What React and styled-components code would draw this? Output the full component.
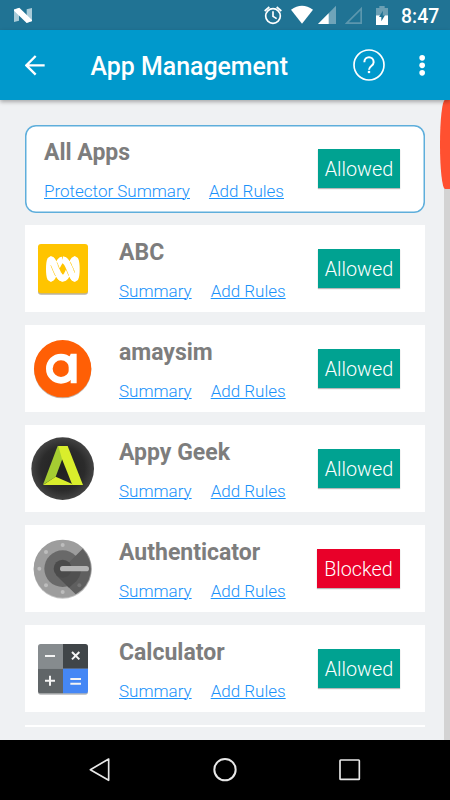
import React, { Component } from "react";
import styled, { createGlobalStyle } from "styled-components";

// 1:3 lissajous curve used by the ABC logo
const curve = (from, to) => {
  const points = [];
  for (let i = 0; i <= 60; i++) {
    const t = (from + ((to - from) * i) / 60) * Math.PI;
    const x = 128.5 + 41 * Math.sin(t);
    const y = 147 - 28 * Math.cos(3 * t);
    points.push(x.toFixed(1) + " " + y.toFixed(1));
  }
  return "M" + points.join("L");
};

const AbcIcon = () => (
  <AppIcon viewBox="33 51 192 192">
    <rect x="54" y="76" width="150" height="148" rx="9" fill="#b9b3a4" />
    <rect x="54" y="72" width="150" height="148" rx="9" fill="#ffc400" />
    <g fill="none" stroke="#fff" strokeWidth="19">
      <path d={curve(0, 2)} />
      <path d={curve(1.1, 1.23)} stroke="#ffc400" strokeWidth="22" />
      <path d={curve(0.1, 0.23)} stroke="#ffc400" strokeWidth="22" />
      <path d={curve(1, 1.33)} />
      <path d={curve(0, 0.33)} />
    </g>
  </AppIcon>
);

const AmaysimIcon = () => (
  <AppIcon viewBox="33 51 192 192">
    <circle cx="128" cy="149" r="86" fill="#c3b4aa" />
    <circle cx="128" cy="146" r="86" fill="#ff5f05" />
    <circle
      cx="123"
      cy="146"
      r="35"
      fill="none"
      stroke="#fff"
      strokeWidth="20"
    />
    <path d="M149 108q2-3 3-7h18v89h-18v-12l-6-4V112z" fill="#fff" />
  </AppIcon>
);

const AppyGeekIcon = () => (
  <AppIcon viewBox="33 51 192 192">
    <defs>
      <radialGradient id="appy">
        <stop offset="0" stopColor="#202020" />
        <stop offset="0.7" stopColor="#2b2b2b" />
        <stop offset="1" stopColor="#434343" />
      </radialGradient>
    </defs>
    <circle cx="128" cy="146" r="94" fill="url(#appy)" />
    <path d="M113 78h14v39l-20 53-38 24z" fill="#a5cd32" />
    <path d="M115 78h28l46 117h-32l-31-78z" fill="#d9ee2c" />
    <path d="M69 195l38-25 50 22v3z" fill="#d9ee2c" />
  </AppIcon>
);

const AuthenticatorIcon = () => (
  <AppIcon viewBox="33 51 192 192">
    <circle cx="128" cy="149" r="87" fill="#c4c4c4" />
    <circle cx="128" cy="146" r="87" fill="#9d9d9d" />
    <circle cx="128" cy="146" r="55" fill="#696969" />
    <path
      d="M167 107l21-21A87 87 0 0 1 167 223L108 165 128 146z"
      fill="#5f5f5f"
    />
    <path d="M128 146h55A55 55 0 0 1 160 191L147 203 108 165z" fill="#505050" />
    <circle cx="128" cy="146" r="27" fill="#4b4b4b" />
    <g fill="#bdbdbd">
      <circle cx="128" cy="75" r="6" />
      <circle cx="78" cy="96" r="6" />
      <circle cx="58" cy="146" r="6" />
      <circle cx="78" cy="196" r="6" />
      <circle cx="128" cy="216" r="6" />
    </g>
    <circle cx="178" cy="196" r="6" fill="#747474" />
    <rect x="120" y="138" width="87" height="16" rx="8" fill="#b4b4b4" />
  </AppIcon>
);

const CalculatorIcon = () => (
  <AppIcon viewBox="33 51 192 192">
    <rect x="54" y="76" width="150" height="148" rx="8" fill="#b5b7b9" />
    <path d="M129 72H62q-8 0-8 8v66h75z" fill="#868b8e" />
    <path d="M129 72h67q8 0 8 8v66h-75z" fill="#404548" />
    <path d="M129 220H62q-8 0-8-8v-66h75z" fill="#606568" />
    <path d="M129 220h67q8 0 8-8v-66h-75z" fill="#4587f5" />
    <g stroke="#f4f4f4" strokeWidth="6" fill="none">
      <path d="M75 108h30M75 182h30M90 167v30M156 96l22 22M178 96l-22 22M151 177h32M151 191h32" />
    </g>
  </AppIcon>
);

const apps = [
  { name: "ABC", icon: AbcIcon },
  { name: "amaysim", icon: AmaysimIcon },
  { name: "Appy Geek", icon: AppyGeekIcon },
  { name: "Authenticator", icon: AuthenticatorIcon, blocked: true },
  { name: "Calculator", icon: CalculatorIcon }
];

const StatusIcons = () => (
  <StatusGroup>
    <Glyph $w={18} $h={30} viewBox="119 0 54 90">
      <g fill="none" stroke="#fff" strokeWidth="5">
        <circle cx="146" cy="48" r="22" />
        <path d="M121 33l14-12M171 33l-14-12" />
        <path d="M146 34v15l11 7" />
      </g>
    </Glyph>
    <Glyph $w={22} $h={30} $left={9} viewBox="199 0 66 90">
      <path d="M199 29Q232 6 265 29L232 71z" fill="#fff" />
    </Glyph>
    <Glyph $w={18} $h={30} $left={5} viewBox="279 0 54 90">
      <path d="M279 72L333 17V72z" fill="#6fa4b9" />
      <path d="M279 72L311 40V72z" fill="#fff" />
    </Glyph>
    <Glyph $w={18} $h={30} $left={9} viewBox="360 0 54 90">
      <path d="M365 69.500L408.500 26V69.500z" fill="none" stroke="#5c97ae" strokeWidth="5" />
    </Glyph>
    <Glyph $w={12} $h={30} $left={13} viewBox="453 0 36 90">
      <path d="M453 24h10v-6h16v6h10v22h-36z" fill="#6b9fb4" />
      <path d="M453 46h36v29h-36z" fill="#fff" />
      <path d="M474 32L462 51h7v13l11-18h-7z" fill="#207394" />
    </Glyph>
    <Clock>8:47</Clock>
  </StatusGroup>
);

export default class App extends Component {
  render() {
    const rows = apps.map(({ name, icon: Icon, blocked }) => (
      <Card key={name}>
        <Icon />
        <Details>
          <Name>{name}</Name>
          <Links>
            <Link>Summary</Link>
            <Link>Add Rules</Link>
          </Links>
        </Details>
        <Status $blocked={blocked}>{blocked ? "Blocked" : "Allowed"}</Status>
      </Card>
    ));

    return (
      <Screen>
        <GlobalStyle />
        <StatusBar>
          <Glyph $w={18} $h={30} viewBox="42 0 54 90">
            <path d="M42 28l15-4v38l-15 4zM80 28l16-4v40l-16 4z" fill="#a9cbd8" />
            <path d="M42 29l16-6 38 37v3l-16 6-38-37z" fill="#fff" />
          </Glyph>
          <StatusIcons />
        </StatusBar>
        <Toolbar>
          <Glyph $w={20} $h={70} viewBox="76 90 60 210">
            <path
              d="M135 196H81M108 168L80 196l28 28"
              fill="none"
              stroke="#fff"
              strokeWidth="7"
            />
          </Glyph>
          <Heading>App Management</Heading>
          <Glyph $w={32} $h={70} viewBox="385 90 96 210">
            <g fill="none" stroke="#fff" strokeWidth="5">
              <circle cx="433" cy="195" r="45" />
              <path d="M419 187c0-20 28-20 28 0 0 11-14 11-14 22" strokeWidth="6" />
            </g>
            <circle cx="433" cy="216" r="4" fill="#fff" />
          </Glyph>
          <Glyph $w={6} $h={70} $left={34} viewBox="583 90 18 210">
            <g fill="#fff">
              <circle cx="592.500" cy="173.500" r="8.500" />
              <circle cx="592.500" cy="196" r="8.500" />
              <circle cx="592.500" cy="218.500" r="8.500" />
            </g>
          </Glyph>
        </Toolbar>
        <Body>
          <List>
            <Card $outlined>
              <Details $outlined>
                <Name>All Apps</Name>
                <Links>
                  <Link>Protector Summary</Link>
                  <Link>Add Rules</Link>
                </Links>
              </Details>
              <Status>Allowed</Status>
            </Card>
            {rows}
            <NextCard />
          </List>
          <Track />
          <Thumb />
        </Body>
        <NavBar>
          <Glyph $w={22} $h={60} viewBox="89 30 66 180">
            <path
              d="M148 87v64L93 119z"
              fill="none"
              stroke="#e8e8e8"
              strokeWidth="5"
              strokeLinejoin="round"
            />
          </Glyph>
          <Glyph $w={24} $h={60} viewBox="459 30 72 180">
            <circle cx="495" cy="119" r="32" fill="none" stroke="#e8e8e8" strokeWidth="6" />
          </Glyph>
          <Glyph $w={22} $h={60} viewBox="837 30 66 180">
            <rect
              x="840"
              y="90"
              width="58"
              height="58"
              rx="2"
              fill="none"
              stroke="#e8e8e8"
              strokeWidth="5"
            />
          </Glyph>
        </NavBar>
      </Screen>
    );
  }
}

const GlobalStyle = createGlobalStyle`
  body {
    margin: 0;
    font-family: Roboto, sans-serif;
  }
`;
const Screen = styled.div`
  width: 450px;
  height: 800px;
  display: flex;
  flex-direction: column;
  overflow: hidden;
  background: #eff1f3;
`;
const StatusBar = styled.div`
  display: flex;
  justify-content: space-between;
  height: 30px;
  padding: 0 11px 0 14px;
  box-sizing: border-box;
  background: #207394;
`;
const StatusGroup = styled.div`
  display: flex;
`;
const Glyph = styled.svg`
  flex: none;
  display: block;
  width: ${(props) => props.$w}px;
  height: ${(props) => props.$h}px;
  margin-left: ${(props) => props.$left || 0}px;
`;
const Clock = styled.span`
  width: 38px;
  margin-left: 13px;
  font-size: 19.4px;
  font-weight: 500;
  line-height: 33px;
  color: #fff;
`;
const Toolbar = styled.div`
  position: relative;
  z-index: 1;
  display: flex;
  height: 70px;
  padding: 0 25px;
  box-sizing: border-box;
  background: #0099cc;
  box-shadow: 0 2px 4px rgba(0, 0, 0, 0.3);
`;
const Heading = styled.h1`
  flex: 1;
  margin: 0 0 0 45.5px;
  font-size: 24.9px;
  font-weight: 500;
  line-height: 73px;
  white-space: nowrap;
  color: #fff;
`;
const Body = styled.div`
  position: relative;
  display: flex;
  height: 640px;
`;
const List = styled.div`
  flex: 1;
  display: flex;
  flex-direction: column;
  gap: 13px;
  padding: 25px 19px 0 25px;
`;
const Card = styled.div`
  flex: none;
  display: flex;
  height: ${(props) => (props.$outlined ? 88 : 87)}px;
  margin-bottom: ${(props) => (props.$outlined ? -1 : 0)}px;
  background: #fff;
  border-radius: ${(props) => (props.$outlined ? "11px" : "0")};
  box-shadow: ${(props) =>
    props.$outlined ? "inset 0 0 0 1.5px #5eaedb" : "none"};
`;
const NextCard = styled.div`
  height: 2px;
  background: #fff;
`;
const AppIcon = styled.svg`
  flex: none;
  width: 64px;
  height: 64px;
  margin: 12px 0 0 6px;
`;
const Details = styled.div`
  flex: 1;
  padding: 14px 0 0 ${(props) => (props.$outlined ? 19 : 24)}px;
`;
const Name = styled.h2`
  margin: 0;
  font-size: 23px;
  font-weight: 700;
  line-height: 27px;
  color: #7d7d7d;
`;
const Links = styled.div`
  display: flex;
  gap: 19px;
  margin-top: 13px;
  white-space: nowrap;
`;
const Link = styled.a`
  font-size: 17px;
  font-weight: 300;
  line-height: 24px;
  color: #1a92fa;
  text-decoration: underline;
  text-decoration-thickness: 1px;
  text-underline-offset: 1px;
  cursor: pointer;
`;
const Status = styled.div`
  flex: none;
  width: ${(props) => (props.$blocked ? 83 : 82)}px;
  height: 39px;
  margin: 24px 25px 0 0;
  font-size: 19.8px;
  font-weight: 300;
  line-height: 42px;
  text-align: center;
  color: #fff;
  background: ${(props) => (props.$blocked ? "#e90029" : "#00a291")};
  box-shadow: 0 1px 1px rgba(0, 0, 0, 0.28);
`;
const Track = styled.div`
  width: 6px;
  background: #d3d3d3;
`;
const Thumb = styled.div`
  position: absolute;
  top: 0;
  right: 0;
  width: 10.5px;
  height: 89px;
  border-radius: 5px 0 0 5px / 44px 0 0 44px;
  background: #ff5030;
`;
const NavBar = styled.div`
  display: flex;
  justify-content: space-between;
  height: 60px;
  padding: 0 89px;
  box-sizing: border-box;
  background: #000;
`;
